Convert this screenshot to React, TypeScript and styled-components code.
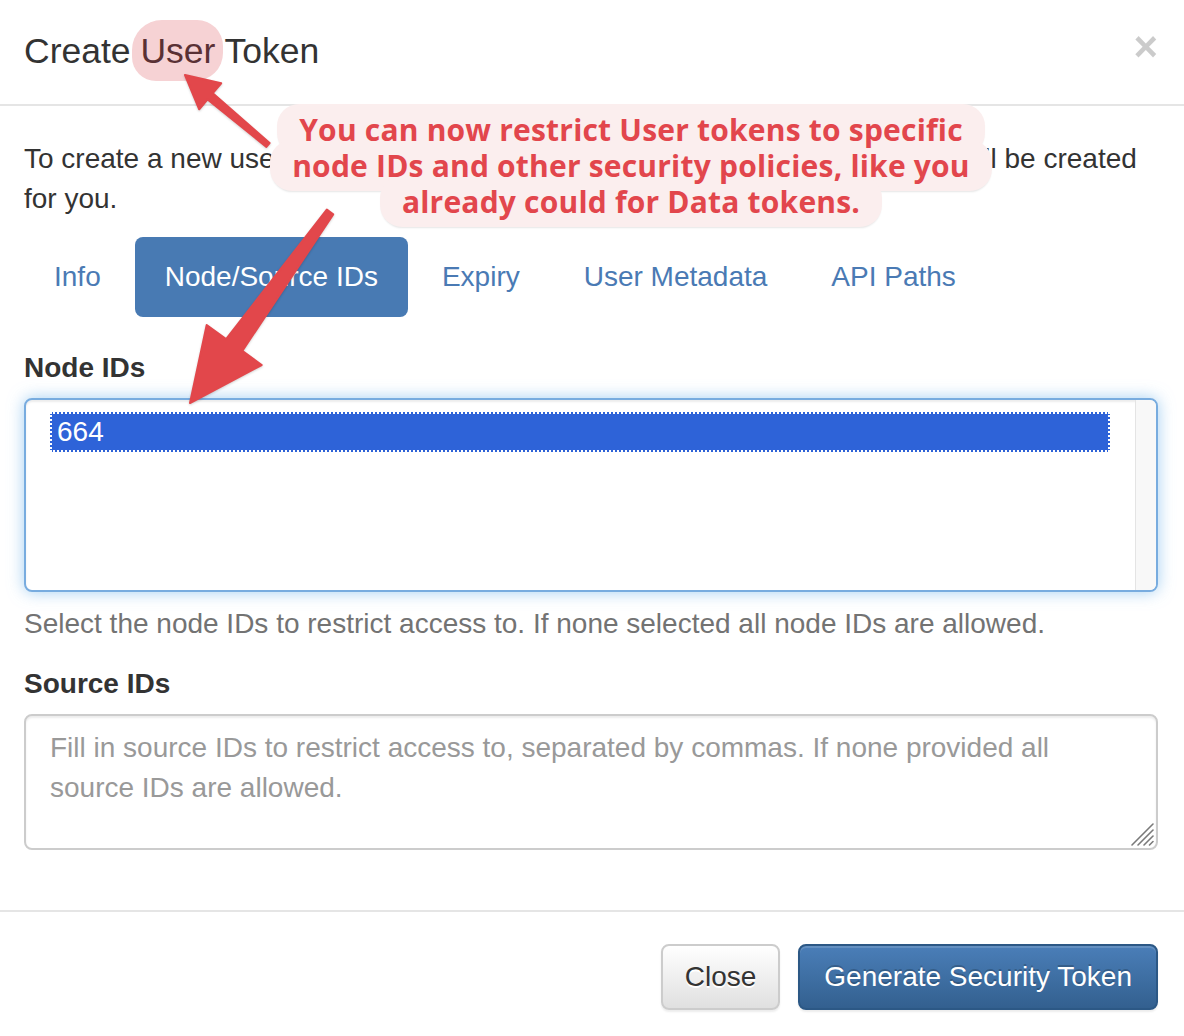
import React from "react";
import styled, { createGlobalStyle } from "styled-components";

const GlobalStyle = createGlobalStyle`
  html, body { margin: 0; padding: 0; background: #fff; }
  body {
    font-family: "Liberation Sans", Arial, Helvetica, sans-serif;
    color: #333;
  }
  * { box-sizing: border-box; }
`;

const Modal = styled.div`
  position: relative;
  width: 1184px;
  height: 1036px;
  overflow: hidden;
  background: #fff;
`;

const Header = styled.header`
  display: flex;
  justify-content: space-between;
  align-items: flex-start;
  height: 106px;
  padding: 23px 26px 25px 24px;
  border-bottom: 2px solid #e5e5e5;
`;

const Title = styled.h4`
  margin: 0;
  font-size: 35.5px;
  line-height: 56px;
  font-weight: 400;
  color: #333;
`;

const Highlight = styled.span`
  background: #f6d2d4;
  color: #5a3135;
  padding: 11px 8px 10px;
  margin: 0 -8px;
  border-radius: 30px 26px 28px 24px;
`;

const CloseX = styled.button`
  margin: 3px 0 0;
  padding: 0;
  border: 0;
  background: none;
  font-family: "Liberation Sans", Arial, sans-serif;
  font-size: 42px;
  font-weight: 700;
  line-height: 1;
  color: #000;
  opacity: 0.2;
`;

const Body = styled.div`
  padding: 33px 26px 60px 24px;
`;

const Intro = styled.p`
  margin: 0 0 18px;
  font-size: 28px;
  line-height: 40px;
`;

const Pills = styled.ul`
  display: flex;
  gap: 4px;
  margin: 0;
  padding: 0;
  list-style: none;
`;

const Pill = styled.a<{ $active?: boolean }>`
  display: block;
  padding: 20px 30px;
  font-size: 28px;
  line-height: 40px;
  border-radius: 8px;
  text-decoration: none;
  color: ${(p) => (p.$active ? "#fff" : "#4a7ab4")};
  background: ${(p) => (p.$active ? "#487ab3" : "transparent")};
`;

const TabContent = styled.div`
  margin-top: 31px;
`;

const Label = styled.label`
  display: block;
  font-size: 28px;
  line-height: 40px;
  font-weight: 700;
  margin-bottom: 10px;
`;

const ListBox = styled.div`
  display: flex;
  height: 194px;
  border: 2px solid #78acdf;
  border-radius: 8px;
  overflow: hidden;
  background: #fff;
  box-shadow: inset 0 2px 2px rgba(0, 0, 0, 0.075), 0 0 16px rgba(102, 175, 233, 0.6);
`;

const ListOptions = styled.div`
  flex: 1;
  padding: 12px 25px 12px 24px;
`;

const Option = styled.div<{ $selected?: boolean }>`
  height: 40px;
  padding: 0 5px;
  font-size: 28px;
  line-height: 36px;
  color: ${(p) => (p.$selected ? "#fff" : "#333")};
  background: ${(p) => (p.$selected ? "#2e63d8" : "transparent")};
  border: 2px dotted ${(p) => (p.$selected ? "#fff" : "transparent")};
`;

const ScrollTrack = styled.div`
  width: 21px;
  background: #f8f8f8;
  border-left: 1px solid #e4e4e4;
`;

const Help = styled.p`
  margin: 12px 0 20px;
  font-size: 28px;
  line-height: 40px;
  color: #737373;
`;

const AreaWrap = styled.div`
  position: relative;
`;

const TextArea = styled.textarea`
  display: block;
  width: 100%;
  height: 136px;
  padding: 12px 24px;
  border: 2px solid #ccc;
  border-radius: 8px;
  font-family: "Liberation Sans", Arial, sans-serif;
  font-size: 28px;
  line-height: 40px;
  color: #555;
  resize: none;
  box-shadow: inset 0 2px 2px rgba(0, 0, 0, 0.075);
  &::placeholder { color: #999; }
`;

const Grip = styled.svg`
  position: absolute;
  right: 3px;
  bottom: 3px;
  pointer-events: none;
`;

const Footer = styled.footer`
  display: flex;
  justify-content: flex-end;
  gap: 18px;
  padding: 32px 26px 0 24px;
  border-top: 2px solid #e5e5e5;
`;

const Button = styled.button<{ $primary?: boolean }>`
  height: 66px;
  padding: 0 ${(p) => (p.$primary ? "24px" : "22px")};
  font-family: "Liberation Sans", Arial, sans-serif;
  font-size: 28px;
  line-height: 40px;
  border-radius: 8px;
  border: 2px solid ${(p) => (p.$primary ? "#2c5885" : "#ccc")};
  color: ${(p) => (p.$primary ? "#fff" : "#333")};
  background: ${(p) =>
    p.$primary
      ? "linear-gradient(to bottom, #4a7eb8 0%, #33608f 100%)"
      : "linear-gradient(to bottom, #fff 0%, #e0e0e0 100%)"};
  text-shadow: ${(p) => (p.$primary ? "0 -2px 0 rgba(0,0,0,0.2)" : "0 2px 0 #fff")};
  box-shadow: inset 0 2px 0 rgba(255, 255, 255, 0.15), 0 2px 2px rgba(0, 0, 0, 0.075);
`;

const Overlay = styled.div`
  position: absolute;
  inset: 0;
  pointer-events: none;
`;

const ArrowLayer = styled.svg`
  position: absolute;
  left: 0;
  top: 0;
  filter: drop-shadow(0 1px 1px rgba(0, 0, 0, 0.18));
`;

const Callout = styled.div`
  position: absolute;
  left: 231px;
  top: 104px;
  width: 800px;
  display: flex;
  flex-direction: column;
  align-items: center;
  font-family: "Open Sans", "Noto Sans", sans-serif;
  font-weight: 700;
  font-size: 30px;
  letter-spacing: 0.2px;
  line-height: 36px;
  color: #e2464c;
  white-space: nowrap;
`;

const CalloutLine = styled.div`
  padding: 8px 22px 7px;
  margin-top: -15px;
  border-radius: 22px;
  background: #fbeeee;
  box-shadow: 0 2px 2px -1px rgba(0, 0, 0, 0.1);
  &:first-child { margin-top: 0; }
`;

const CalloutText = styled.span`
  position: relative;
  z-index: 1;
`;

const tabs = ["Info", "Node/Source IDs", "Expiry", "User Metadata", "API Paths"];
const calloutLines = [
  "You can now restrict User tokens to specific",
  "node IDs and other security policies, like you",
  "already could for Data tokens.",
];

export default function App() {
  return (
    <>
      <GlobalStyle />
      <Modal>
        <Header>
          <Title>
            Create <Highlight>User</Highlight> Token
          </Title>
          <CloseX aria-label="Close">×</CloseX>
        </Header>
        <Body>
          <Intro>
            To create a new user security token, fill out the settings below. A new token will be created for you.
          </Intro>
          <Pills>
            {tabs.map((t) => (
              <li key={t}>
                <Pill href="#" $active={t === "Node/Source IDs"}>
                  {t}
                </Pill>
              </li>
            ))}
          </Pills>
          <TabContent>
            <Label>Node IDs</Label>
            <ListBox role="listbox" aria-multiselectable="true">
              <ListOptions>
                <Option $selected role="option">664</Option>
              </ListOptions>
              <ScrollTrack />
            </ListBox>
            <Help>Select the node IDs to restrict access to. If none selected all node IDs are allowed.</Help>
            <Label>Source IDs</Label>
            <AreaWrap>
              <TextArea placeholder="Fill in source IDs to restrict access to, separated by commas. If none provided all source IDs are allowed." />
              <Grip width="26" height="26" viewBox="0 0 26 26">
                <g stroke="#7a7a7a" strokeWidth="1.6" strokeLinecap="round">
                  <line x1="24" y1="3" x2="3" y2="24" />
                  <line x1="24" y1="9" x2="9" y2="24" />
                  <line x1="24" y1="15" x2="15" y2="24" />
                  <line x1="24" y1="20.5" x2="20.5" y2="24" />
                </g>
              </Grip>
            </AreaWrap>
          </TabContent>
        </Body>
        <Footer>
          <Button>Close</Button>
          <Button $primary>Generate Security Token</Button>
        </Footer>
        <Overlay>
          <ArrowLayer width="1184" height="1036" viewBox="0 0 1184 1036">
            <g fill="#e2474b" stroke="#e2474b" strokeWidth="2" strokeLinejoin="round">
              <polygon points="185,75 221.2,83.3 212.8,93.2 269.6,143.1 266.4,146.9 207.6,99.4 199.2,109.3" />
              <polygon points="190,403 206.7,325 226.1,339.1 326.8,209.6 333.2,214.4 242.3,350.9 261.7,365" />
            </g>
          </ArrowLayer>
          <Callout>
            {calloutLines.map((l) => (
              <CalloutLine key={l}>
                <CalloutText>{l}</CalloutText>
              </CalloutLine>
            ))}
          </Callout>
        </Overlay>
      </Modal>
    </>
  );
}
